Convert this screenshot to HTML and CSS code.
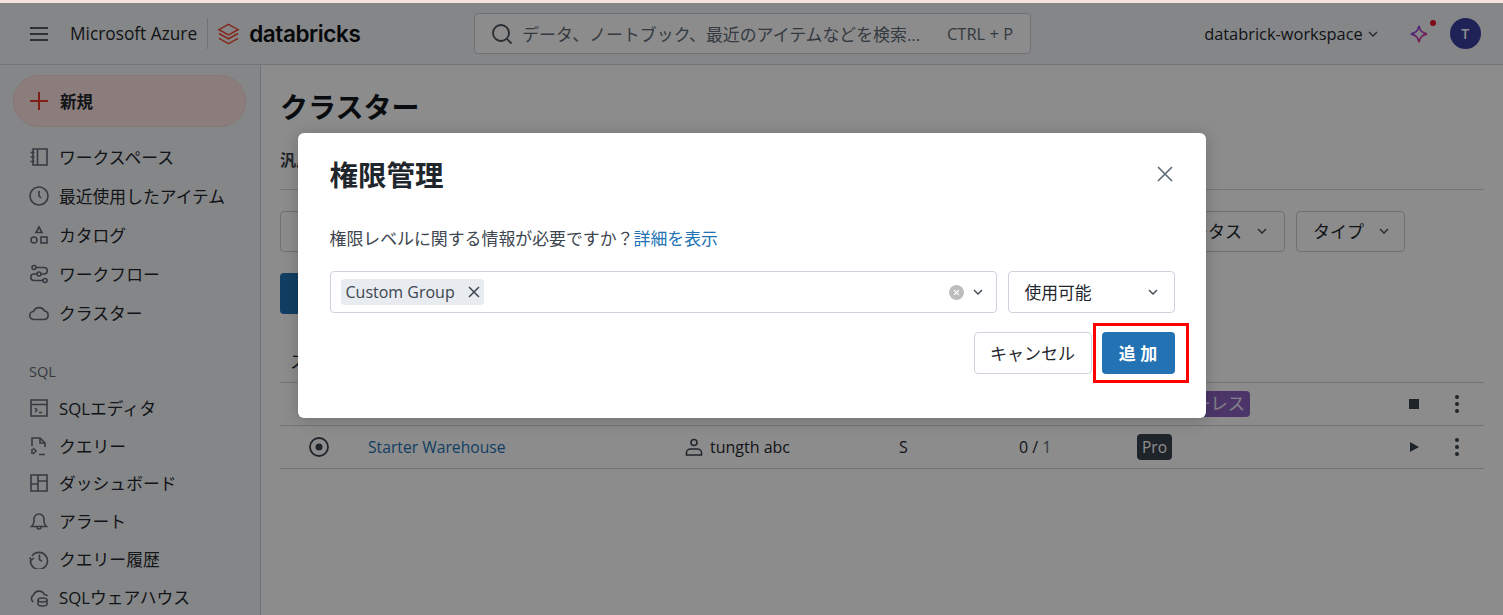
FILE: index.html
```html
<!DOCTYPE html>
<html lang="ja">
<head>
<meta charset="utf-8">
<title>クラスター</title>
<link rel="stylesheet" href="styles.css">
</head>
<body>
<div class="app">
  <header class="topbar">
    <svg class="burger" viewBox="0 0 18 14" width="18" height="14"><path d="M0 1h18M0 7h18M0 13h18" stroke="#4f5a64" stroke-width="1.800"/></svg>
    <span class="azure">Microsoft Azure</span>
    <span class="divider"></span>
    <svg class="logo" viewBox="0 0 24 24" width="23" height="24" fill="none" stroke="#f04a34" stroke-width="1.600"><path d="M12 2 22 7.500 12 13 2 7.500Z"/><path d="M2 11.500 12 17l10-5.500"/><path d="M2 16.500 12 22l10-5.500"/></svg>
    <span class="brand">databricks</span>
    <div class="search">
      <svg viewBox="0 0 22 22" width="22" height="22" fill="none" stroke="#4a525b" stroke-width="1.800"><circle cx="10" cy="10" r="8"/><path d="m16 16 4.500 4.500"/></svg>
      <span class="search-text">データ、ノートブック、最近のアイテムなどを検索...</span>
      <span class="shortcut">CTRL + P</span>
    </div>
    <span class="workspace">databrick-workspace</span>
    <svg class="chev-small" viewBox="0 0 10 6" width="10" height="6" fill="none" stroke="#4a525b" stroke-width="1.500"><path d="m1 1 4 4 4-4"/></svg>
    <span class="spark">
      <svg viewBox="0 0 20 20" width="20" height="20" fill="none" stroke-width="1.800"><defs><linearGradient id="sg" x1="0" y1="0" x2="1" y2="1"><stop offset="0" stop-color="#6a4cff"/><stop offset="1" stop-color="#ff3d7f"/></linearGradient></defs><path d="M10 2c1 5 3 7 8 8-5 1-7 3-8 8-1-5-3-7-8-8 5-1 7-3 8-8Z" stroke="url(#sg)"/></svg>
      <i class="spark-dot"></i>
    </span>
    <span class="avatar">T</span>
  </header>
  <div class="shell">
    <aside class="sidebar">
      <div class="new-btn">
        <svg viewBox="0 0 18 18" width="18" height="18"><path d="M9 0v18M0 9h18" stroke="#e8392c" stroke-width="2"/></svg>
        <span>新規</span>
      </div>
      <nav class="nav-group">
        <a class="nav-item"><svg class="ni" viewBox="0 0 20 20"><path d="M4 2h14v16H4zM8.500 2v16M1.500 5.500h4M1.500 10h4M1.500 14.500h4"/></svg>ワークスペース</a>
        <a class="nav-item"><svg class="ni" viewBox="0 0 20 20"><circle cx="10" cy="10" r="9"/><path d="M10 5v5l2 2"/></svg>最近使用したアイテム</a>
        <a class="nav-item"><svg class="ni" viewBox="0 0 20 20"><path d="M10 2l3 5.500H7z"/><circle cx="5" cy="15" r="3"/><rect x="12" y="12" width="6" height="6"/></svg>カタログ</a>
        <a class="nav-item"><svg class="ni" viewBox="0 0 20 20"><circle cx="5" cy="3.500" r="2"/><circle cx="10" cy="10" r="2"/><circle cx="16" cy="16.500" r="2"/><path d="M7 3.500h8a3 3 0 0 1 0 6.500h-3M8 10H5a3.200 3.200 0 0 0 0 6.500h9"/></svg>ワークフロー</a>
        <a class="nav-item"><svg class="ni" viewBox="0 0 20 20"><path d="M5 16.500a4 4 0 0 1-.5-8A6 6 0 0 1 15.500 8a4.300 4.300 0 0 1 0 8.500z"/></svg>クラスター</a>
      </nav>
      <div class="nav-label">SQL</div>
      <nav class="nav-group nav-sql">
        <a class="nav-item"><svg class="ni" viewBox="0 0 20 20"><path d="M2 2h16v16H2zM2 6.500h16M6 10l2 2-2 2M10 14.500h3"/></svg>SQLエディタ</a>
        <a class="nav-item"><svg class="ni" viewBox="0 0 20 20"><path d="M3 10V2h8l5 5v4M11 2v5h5M3 13v5M4 12l3 3-3 3M10 18.500h6"/></svg>クエリー</a>
        <a class="nav-item"><svg class="ni" viewBox="0 0 20 20"><path d="M2 2h16v16H2zM9 2v16M9 8h9M2 11h7"/></svg>ダッシュボード</a>
        <a class="nav-item"><svg class="ni" viewBox="0 0 20 20"><path d="M2.500 15.500h15c-1.500-1.500-2.500-3-2.500-5V8a5 5 0 0 0-10 0v2.500c0 2-1 3.500-2.500 5zM8 16a2 2 0 0 0 4 0"/></svg>アラート</a>
        <a class="nav-item"><svg class="ni" viewBox="0 0 20 20"><path d="M3 7a8.500 8.500 0 1 1-1.500 4M.5 8.500 2.500 11l2.500-2M10.500 5.500v5l2.500 2"/></svg>クエリー履歴</a>
        <a class="nav-item"><svg class="ni" viewBox="0 0 20 20"><path d="M4.500 15a4 4 0 0 1 0-7A6 6 0 0 1 15.500 7.500a4 4 0 0 1 3 1.500"/><ellipse cx="13.500" cy="13" rx="4.500" ry="2"/><path d="M9 13v4c0 1 2 2 4.500 2s4.500-1 4.500-2v-4"/></svg>SQLウェアハウス</a>
      </nav>
    </aside>
    <main class="main">
      <h1 class="page-title">クラスター</h1>
      <div class="tabs"><span class="tab">汎用</span></div>
      <div class="filters">
        <div class="filter-input"></div>
        <div class="filter-btn filter-status">ステータス<svg class="chev" viewBox="0 0 10 6"><path d="m1 1 4 4 4-4"/></svg></div>
        <div class="filter-btn filter-type">タイプ<svg class="chev" viewBox="0 0 10 6"><path d="m1 1 4 4 4-4"/></svg></div>
      </div>
      <div class="create-btn">作成</div>
      <div class="table-head">ステータス</div>
      <div class="row">
        <span class="cell-status"></span>
        <span class="cell-name"></span>
        <span class="cell-owner"></span>
        <span class="cell-size"></span>
        <span class="cell-count"></span>
        <span class="cell-type"><span class="badge badge-purple">サーバーレス</span></span>
        <span class="cell-action"><i class="stop"></i></span>
        <span class="cell-more"><i class="dots"></i></span>
      </div>
      <div class="row">
        <span class="cell-status"><svg viewBox="0 0 20 20" width="20" height="20" fill="none" stroke="#3d464f" stroke-width="1.800"><circle cx="10" cy="10" r="9"/><circle cx="10" cy="10" r="3.500" fill="#3d464f" stroke="none"/></svg></span>
        <span class="cell-name"><a class="link-name">Starter Warehouse</a></span>
        <span class="cell-owner"><svg viewBox="0 0 18 18" width="18" height="18" fill="none" stroke="#3d464f" stroke-width="1.600"><circle cx="9" cy="4.500" r="3"/><path d="M1.500 17v-2.500c0-2 2-3.500 4-3.500h7c2 0 4 1.500 4 3.500V17z"/></svg>tungth abc</span>
        <span class="cell-size">S</span>
        <span class="cell-count">0 / <em>1</em></span>
        <span class="cell-type"><span class="badge badge-dark">Pro</span></span>
        <span class="cell-action"><i class="play"></i></span>
        <span class="cell-more"><i class="dots"></i></span>
      </div>
    </main>
  </div>
  <div class="scrim">
    <section class="modal">
      <div class="modal-head">
        <h2 class="modal-title">権限管理</h2>
        <svg class="modal-close" viewBox="0 0 16 16" width="16" height="16" fill="none" stroke="#5f6b76" stroke-width="1.700"><path d="m1 1 14 14M15 1 1 15"/></svg>
      </div>
      <p class="modal-text">権限レベルに関する情報が必要ですか？<a class="modal-link">詳細を表示</a></p>
      <div class="modal-fields">
        <div class="field field-group">
          <span class="tag">Custom Group<svg viewBox="0 0 12 12" width="12" height="12" fill="none" stroke="#3d464f" stroke-width="1.500"><path d="m1 1 10 10M11 1 1 11"/></svg></span>
          <span class="clear"><svg viewBox="0 0 16 16" width="15" height="15"><circle cx="8" cy="8" r="8" fill="#bdbdbd"/><path d="m5.500 5.500 5 5M10.500 5.500l-5 5" stroke="#fff" stroke-width="1.300"/></svg></span>
          <svg class="chev" viewBox="0 0 10 6"><path d="m1 1 4 4 4-4"/></svg>
        </div>
        <div class="field field-level">使用可能<svg class="chev" viewBox="0 0 10 6"><path d="m1 1 4 4 4-4"/></svg></div>
      </div>
      <div class="modal-actions">
        <button class="btn btn-cancel">キャンセル</button>
        <button class="btn btn-add">追 加<span class="highlight"></span></button>
      </div>
    </section>
  </div>
</div>
</body>
</html>
```
FILE: styles.css
```css
* { box-sizing: border-box; }
html, body { margin: 0; height: 100%; overflow: hidden; }
body {
  font-family: "Open Sans", "Noto Sans CJK JP", sans-serif;
  font-size: 16px;
  color: #1f272d;
  background: #fff;
}
a { text-decoration: none; }
em { font-style: normal; color: #5f6b76; }

.app {
  position: relative;
  height: 615px;
  border-top: 3px solid #f7e3df;
  display: flex;
  flex-direction: column;
  overflow: hidden;
}

.topbar {
  height: 62px;
  flex: none;
  display: flex;
  align-items: center;
  padding-left: 30px;
  background: #f3f5f7;
  border-bottom: 1px solid #cdd4de;
}
.azure { margin-left: 22px; font-size: 17.300px; color: #1f272d; white-space: nowrap; }
.divider { width: 1px; height: 31px; background: #cbd2da; margin: 0 9px 0 10px; }
.brand {
  margin-left: 9px;
  width: 113px;
  flex: none;
  font-family: Inter, sans-serif;
  font-size: 22.500px;
  font-weight: 600;
  color: #0b0f13;
  letter-spacing: -.4px;
  white-space: nowrap;
}
.search {
  margin-left: 112px;
  width: 557px;
  height: 41px;
  flex: none;
  display: flex;
  align-items: center;
  padding: 0 17px 0 16px;
  border: 1px solid #c7ced7;
  border-radius: 4px;
  background: #fff;
}
.search-text { margin-left: 9px; font-size: 16.900px; color: #5f6b76; white-space: nowrap; }
.shortcut { margin-left: auto; font-size: 16.500px; color: #5f6b76; white-space: nowrap; }
.workspace { margin-left: 173px; font-size: 16.400px; color: #1f272d; white-space: nowrap; }
.chev-small { margin-left: 5px; }
.spark { position: relative; margin-left: 31px; display: flex; }
.spark-dot {
  position: absolute;
  right: -7px;
  top: -4px;
  width: 6px;
  height: 6px;
  border-radius: 50%;
  background: #e8152c;
}
.avatar {
  margin-left: 21px;
  width: 31px;
  height: 31px;
  border-radius: 50%;
  background: #3a3f9e;
  color: #fff;
  font-size: 14px;
  font-weight: 600;
  display: flex;
  align-items: center;
  justify-content: center;
}

.shell { flex: 1; display: flex; min-height: 0; }
.sidebar {
  width: 261px;
  flex: none;
  padding: 10px 14px 0 13px;
  background: #f3f5f7;
  border-right: 1px solid #cdd4de;
}
.new-btn {
  height: 52px;
  display: flex;
  align-items: center;
  gap: 12px;
  padding-left: 16px;
  border: 1px solid #fbd5d2;
  border-radius: 26px;
  background: #fde4e2;
  font-weight: 600;
  font-size: 16.500px;
}
.nav-group { display: flex; flex-direction: column; margin-top: 11px; }
.nav-item {
  height: 38.800px;
  display: flex;
  align-items: center;
  gap: 10px;
  padding-left: 16px;
  font-size: 16.800px;
  color: #1f272d;
  white-space: nowrap;
}
.ni {
  width: 20px;
  height: 20px;
  flex: none;
  fill: none;
  stroke: #5f6b76;
  stroke-width: 1.600;
}
.nav-label { margin: 30px 0 0 16px; height: 24px; font-size: 14.500px; color: #5f6b76; }
.nav-sql { margin-top: 3px; }
.nav-sql .nav-item { height: 37.800px; }

.main { flex: 1; min-width: 0; padding: 0 19px 0 19px; background: #fff; }
.page-title {
  margin: 21px 0 0;
  height: 44px;
  font-size: 28px;
  line-height: 42px;
  font-weight: 700;
  color: #11171c;
}
.tabs { margin-top: 17px; height: 43px; border-bottom: 1px solid #cdd4de; }
.tab { font-size: 16px; font-weight: 600; color: #3d464f; }
.filters { margin-top: 21px; height: 41px; display: flex; gap: 11px; }
.filter-input { flex: 1; border: 1px solid #c7ced7; border-radius: 4px; }
.filter-btn {
  display: flex;
  align-items: center;
  justify-content: space-between;
  padding: 0 15px 2px 16px;
  border: 1px solid #c7ced7;
  border-radius: 4px;
  font-size: 17px;
}
.filter-status { width: 145px; padding-right: 17px; }
.filter-type { width: 109px; margin-right: 79px; }
.chev { width: 10px; height: 6px; fill: none; stroke: #4a525b; stroke-width: 1.500; flex: none; }
.create-btn {
  margin-top: 21px;
  width: 90px;
  height: 41px;
  border-radius: 4px;
  background: #2272b4;
  color: #fff;
  display: flex;
  align-items: center;
  justify-content: center;
}
.table-head {
  height: 69px;
  display: flex;
  align-items: center;
  padding: 24px 0 0 10px;
  border-bottom: 1px solid #cdd4de;
  font-size: 17px;
}
.row {
  height: 43px;
  display: flex;
  align-items: center;
  border-bottom: 1px solid #cdd4de;
  font-size: 16px;
}
.cell-status { width: 88px; padding-left: 29px; display: flex; }
.cell-name { width: 317px; font-size: 15.700px; }
.link-name { color: #2272b4; }
.cell-owner { width: 214px; display: flex; align-items: center; gap: 7px; }
.cell-size { width: 120px; }
.cell-count { width: 118px; }
.cell-type { width: 265px; display: flex; align-items: center; }
.cell-action { width: 53px; display: flex; align-items: center; }
.cell-more { display: flex; align-items: center; }
.badge { padding: 0 5px; border-radius: 4px; line-height: 26px; font-size: 15.500px; }
.badge-purple { background: #8a63bf; color: #f0e6fa; font-size: 17.200px; }
.badge-dark { background: #37424c; color: #fff; }
.stop { width: 10px; height: 10px; background: #37424c; margin-left: 7px; }
.play {
  width: 0;
  height: 0;
  margin-left: 8px;
  border-left: 9px solid #37424c;
  border-top: 5.500px solid transparent;
  border-bottom: 5.500px solid transparent;
}
.dots {
  width: 4px;
  height: 4px;
  border-radius: 50%;
  background: #37424c;
  box-shadow: 0 -7px 0 #37424c, 0 7px 0 #37424c;
}

.scrim {
  position: absolute;
  inset: 0;
  padding-top: 130px;
  display: flex;
  justify-content: center;
  align-items: flex-start;
  background: rgba(0, 0, 0, .45);
}
.modal {
  width: 908px;
  height: 285px;
  padding: 0 31px 0 32px;
  border-radius: 6px;
  background: #fff;
  box-shadow: 0 2px 16px rgba(0, 0, 0, .2);
}
.modal-head {
  height: 86px;
  display: flex;
  align-items: flex-start;
  justify-content: space-between;
}
.modal-title { margin: 21px 0 0; font-size: 28.500px; line-height: 42px; font-weight: 700; color: #1f272d; }
.modal-close { margin: 33px 2px 0 0; }
.modal-text { margin: 0; height: 40px; line-height: 40px; font-size: 16.900px; color: #3d464f; }
.modal-link { color: #2272b4; }
.modal-fields { margin-top: 12px; display: flex; gap: 11px; }
.field {
  height: 42px;
  display: flex;
  align-items: center;
  border: 1px solid #cdd4de;
  border-radius: 4px;
  background: #fff;
}
.field-group { width: 667px; padding: 0 13px 0 10px; }
.field-level { width: 167px; padding: 0 16px; justify-content: space-between; font-size: 16.800px; color: #1f272d; }
.tag {
  height: 26px;
  width: 143px;
  display: flex;
  align-items: center;
  justify-content: space-between;
  padding: 0 4px 0 5px;
  border-radius: 4px;
  background: #e8ebf0;
  font-size: 16px;
  color: #3d464f;
}
.clear { margin: 0 9px 0 auto; display: flex; }
.modal-actions { margin-top: 19px; display: flex; justify-content: flex-end; gap: 10px; }
.btn {
  position: relative;
  height: 42px;
  padding: 0 0 2px;
  border-radius: 4px;
  font-family: inherit;
  font-size: 17px;
}
.btn-cancel { width: 118px; background: #fff; border: 1px solid #cdd4de; color: #1f272d; }
.btn-add { width: 73px; background: #2272b4; border: 0; color: #fff; font-weight: 600; }
.highlight {
  position: absolute;
  left: -9px;
  top: -9px;
  width: 96px;
  height: 60px;
  border: 3px solid #f00;
}
```
